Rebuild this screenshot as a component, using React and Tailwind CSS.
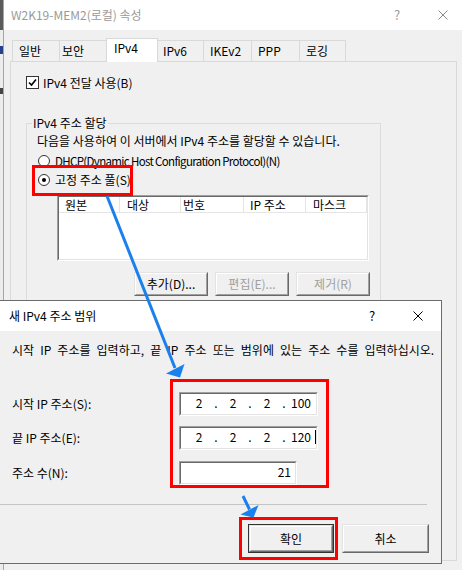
import React from 'react';

const tabs = [
  { label: '일반', box: 'w-[47px] h-[21px] border-l border-t items-center pl-[6px]' },
  { label: '보안', box: 'w-[47px] h-[21px] border-l border-t items-center pl-[2px]' },
  { label: 'IPv4', box: 'w-[52px] h-[24px] -mb-px border-l border-t border-r items-start pt-[1px] pl-[7px] bg-white z-10' },
  { label: 'IPv6', box: 'w-[45px] h-[21px] border-t items-center pl-[5px]' },
  { label: 'IKEv2', box: 'w-[48px] h-[21px] border-l border-t items-center pl-[6px]' },
  { label: 'PPP', box: 'w-[48px] h-[21px] border-l border-t items-center pl-[6px]' },
  { label: '로깅', box: 'w-[47px] h-[21px] border-l border-t border-r items-center pl-[6px]' },
];

const columns = [
  { label: '원본', cls: 'w-[61px] pl-[6px] border-r' },
  { label: '대상', cls: 'w-[61px] pl-[7px] border-r' },
  { label: '번호', cls: 'w-[63px] pl-[2px] border-r' },
  { label: 'IP 주소', cls: 'w-[62px] pl-[6px] border-r' },
  { label: '마스크', cls: 'flex-1 pl-[7px] border-r' },
];

// classic raised button
const Button = ({ children, disabled, isDefault, className }) => {
  const face = (
    <div className="h-full border-t border-l border-t-[#e3e3e3] border-l-[#e3e3e3] border-b border-r border-b-[#696969] border-r-[#696969]">
      <div className="h-full flex items-center justify-center border-t border-l border-t-white border-l-white border-b border-r border-b-[#a0a0a0] border-r-[#a0a0a0] bg-[#f0f0f0]">
        <span className={disabled ? 'text-[#a0a0a0]' : 'text-black'}>{children}</span>
      </div>
    </div>
  );
  if (isDefault) {
    return <div className={`border border-[#333] ${className}`}>{face}</div>;
  }
  return <div className={className}>{face}</div>;
};

// sunken edit / list frame
const Sunken = ({ className, children }) => (
  <div className={`border-t border-l border-t-[#a0a0a0] border-l-[#a0a0a0] border-b border-r border-b-white border-r-white ${className}`}>
    <div className="h-full border-t border-l border-t-[#696969] border-l-[#696969] border-b border-r border-b-[#e3e3e3] border-r-[#e3e3e3] bg-white">
      {children}
    </div>
  </div>
);

const IpField = ({ octets, cursor }) => (
  <Sunken className="w-[139px] h-[24px]">
    <div className="h-full flex items-center pl-[4px] pb-[2px]">
      {octets.map((o, i) => (
        <React.Fragment key={i}>
          <span className="w-[28px] text-center relative">
            {o}
            {cursor && i === 3 && <span className="absolute right-[-1px] top-[1px] w-px h-[14px] bg-black" />}
          </span>
          {i < 3 && <span className="w-[6px] text-center">.</span>}
        </React.Fragment>
      ))}
    </div>
  </Sunken>
);

const CloseGlyph = ({ color }) => (
  <svg width="10" height="10" viewBox="0 0 10 10">
    <path d="M0.5 0.5 L9.5 9.5 M9.5 0.5 L0.5 9.5" stroke={color} strokeWidth="1" />
  </svg>
);

export default function App() {
  return (
    <div className="relative w-[462px] h-[570px] overflow-hidden bg-[#f0f0f0] text-black text-[12px] leading-[16px] font-[family-name:'Noto_Sans_CJK_KR',sans-serif]">
      <div className="flex h-[570px]">
        {/* window behind */}
        <div className="w-[3px] shrink-0 flex flex-col">
          <div className="h-[30px] shrink-0 bg-[#5b5b5b]" />
          <div className="h-[16px] shrink-0 bg-[#ececec]" />
          <div className="h-[8px] shrink-0 bg-[#27408b]" />
          <div className="h-[34px] shrink-0 bg-[#ececec]" />
          <div className="h-[6px] shrink-0 bg-[#444]" />
          <div className="flex-1 bg-[#ececec]" />
        </div>

        {/* back window: properties */}
        <div className="w-[463px] shrink-0 border-l border-[#a6a6a6] h-[570px] flex flex-col overflow-hidden">
          <div className="h-[30px] shrink-0 bg-white flex items-center pl-[7px] text-[#9a9a9a]">
            <span className="flex-1">W2K19-MEM2(로컬) 속성</span>
            <span className="w-[46px] text-center text-[13px]">?</span>
            <span className="w-[46px] flex justify-center"><CloseGlyph color="#8a8a8a" /></span>
          </div>

          <div className="flex-1 bg-[#f0f0f0] pt-[8px] pl-[6px]">
            <div className="flex items-end h-[23px] pl-[2px]">
              {tabs.map((t) => (
                <div key={t.label} className={`flex border-[#d9d9d9] ${t.box}`}>
                  {t.label}
                </div>
              ))}
            </div>

            <div className="w-[447px] h-[500px] border border-[#d9d9d9] pl-[15px] pt-[14px]">
              <div className="flex items-center h-[13px] gap-[4px]">
                <div className="w-[13px] h-[13px] border border-[#333] bg-white flex items-center justify-center">
                  <svg width="9" height="9" viewBox="0 0 9 9">
                    <path d="M1 4.5 L3.5 7 L8 1.5" fill="none" stroke="#000" strokeWidth="1.6" />
                  </svg>
                </div>
                <span>IPv4 전달 사용(B)</span>
              </div>

              <fieldset className="mt-[28px] w-[355px] h-[198px] border border-[#dcdcdc] px-[10px]">
                <legend className="-ml-[5px] px-[1px] leading-[12px]">IPv4 주소 할당</legend>
                <div className="mt-[4px]">다음을 사용하여 이 서버에서 IPv4 주소를 할당할 수 있습니다.</div>

                <div className="mt-[4px] h-[16px] flex items-center gap-[5px] pl-[1px]">
                  <div className="w-[12px] h-[12px] rounded-full border border-[#333] bg-white" />
                  <span className="text-[11.5px] tracking-[-0.65px]">DHCP(Dynamic Host Configuration Protocol)(N)</span>
                </div>
                <div className="mt-[3px] h-[16px] flex items-center gap-[5px] pl-[1px]">
                  <div className="w-[12px] h-[12px] rounded-full border border-[#333] bg-white flex items-center justify-center">
                    <div className="w-[4px] h-[4px] rounded-full bg-black" />
                  </div>
                  <span>고정 주소 풀(S)</span>
                </div>

                <Sunken className="mt-[7px] ml-[20px] w-[312px] h-[66px]">
                  <div className="flex h-[16px] border-b border-[#e5e5e5]">
                    {columns.map((c) => (
                      <div key={c.label} className={`h-full flex items-center border-[#e5e5e5] ${c.cls}`}>
                        {c.label}
                      </div>
                    ))}
                  </div>
                </Sunken>

                <div className="mt-[11px] flex justify-end gap-[7px]">
                  <Button className="w-[74px] h-[24px]">추가(D)...</Button>
                  <Button disabled className="w-[74px] h-[24px]">편집(E)...</Button>
                  <Button disabled className="w-[74px] h-[24px]">제거(R)</Button>
                </div>
              </fieldset>
            </div>
          </div>
        </div>
      </div>

      {/* new range dialog, on top */}
      <div className="absolute left-[-8px] top-[300px] w-[450px] h-[264px] border border-[#6b6b6b] bg-[#f0f0f0] flex flex-col">
        <div className="h-[30px] shrink-0 bg-white flex items-center pl-[16px]">
          <span className="flex-1">새 IPv4 주소 범위</span>
          <span className="w-[46px] text-center text-[13px]">?</span>
          <span className="w-[46px] flex justify-center"><CloseGlyph color="#000" /></span>
        </div>

        <div className="pl-[19px] pt-[11px]">
          <div className="[word-spacing:3.4px]">시작 IP 주소를 입력하고, 끝 IP 주소 또는 범위에 있는 주소 수를 입력하십시오.</div>

          <div className="mt-[34px] flex items-center">
            <span className="w-[167px]">시작 IP 주소(S):</span>
            <IpField octets={['2', '2', '2', '100']} />
          </div>
          <div className="mt-[10px] flex items-center">
            <span className="w-[167px]">끝 IP 주소(E):</span>
            <IpField octets={['2', '2', '2', '120']} cursor />
          </div>
          <div className="mt-[11px] flex items-center">
            <span className="w-[167px]">주소 수(N):</span>
            <Sunken className="w-[118px] h-[24px]">
              <div className="h-full flex items-center justify-end pr-[4px] pb-[2px]">21</div>
            </Sunken>
          </div>
        </div>

        <div className="mt-[19px] mr-[14px] h-px shrink-0 bg-[#c4c4c4]" />

        <div className="mt-[19px] flex justify-end gap-[8px] pr-[12px]">
          <Button isDefault className="w-[86px] h-[29px]">확인</Button>
          <Button className="w-[87px] h-[29px]">취소</Button>
        </div>
      </div>

      {/* annotations */}
      <div className="absolute left-[32px] top-[165px] w-[101px] h-[31px] border-[3px] border-[#f00]" />
      <div className="absolute left-[170px] top-[379px] w-[159px] h-[109px] border-[3px] border-[#f00]" />
      <div className="absolute left-[239px] top-[517px] w-[99px] h-[43px] border-[3px] border-[#f00]" />

      <svg className="absolute left-0 top-0 pointer-events-none" width="462" height="570" viewBox="0 0 462 570">
        <line x1="107" y1="196" x2="175" y2="368" stroke="#1a80ee" strokeWidth="3" />
        <polygon points="166,373.5 184.5,364 180,377.5" fill="#1a80ee" />
        <line x1="243" y1="496" x2="249.5" y2="509.5" stroke="#1a80ee" strokeWidth="3" />
        <polygon points="240.5,514.5 258.5,505 253.5,517.5" fill="#1a80ee" />
      </svg>
    </div>
  );
}
